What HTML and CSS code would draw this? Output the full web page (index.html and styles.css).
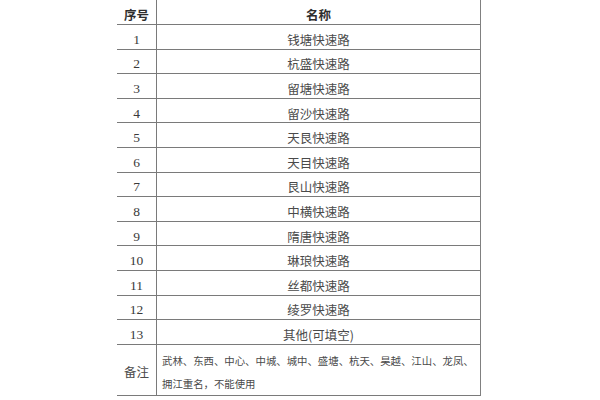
FILE: index.html
```html
<!DOCTYPE html>
<html lang="zh">
<head>
<meta charset="utf-8">
<link rel="stylesheet" href="styles.css">
</head>
<body>
<div class="page">
  <div class="table">
    <div class="row head"><div class="c1">序号</div><div class="c2">名称</div></div>
    <div class="row"><div class="c1 num">1</div><div class="c2">钱塘快速路</div></div>
    <div class="row"><div class="c1 num">2</div><div class="c2">杭盛快速路</div></div>
    <div class="row"><div class="c1 num">3</div><div class="c2">留塘快速路</div></div>
    <div class="row"><div class="c1 num">4</div><div class="c2">留沙快速路</div></div>
    <div class="row"><div class="c1 num">5</div><div class="c2">天艮快速路</div></div>
    <div class="row"><div class="c1 num">6</div><div class="c2">天目快速路</div></div>
    <div class="row"><div class="c1 num">7</div><div class="c2">艮山快速路</div></div>
    <div class="row"><div class="c1 num">8</div><div class="c2">中横快速路</div></div>
    <div class="row"><div class="c1 num">9</div><div class="c2">隋唐快速路</div></div>
    <div class="row"><div class="c1 num">10</div><div class="c2">琳琅快速路</div></div>
    <div class="row"><div class="c1 num">11</div><div class="c2">丝都快速路</div></div>
    <div class="row"><div class="c1 num">12</div><div class="c2">绫罗快速路</div></div>
    <div class="row"><div class="c1 num">13</div><div class="c2">其他(可填空)</div></div>
    <div class="row note"><div class="c1">备注</div><div class="c2">武林、东西、中心、中城、城中、盛塘、杭天、昊越、江山、龙凤、<br>拥江重名，不能使用</div></div>
  </div>
</div>
</body>
</html>
```

FILE: styles.css
```css
html, body {
  margin: 0;
  padding: 0;
  background: #ffffff;
}

.page {
  padding-left: 117px;
  font-family: "Noto Sans CJK SC", "Noto Sans", sans-serif;
  color: #4a4a4a;
}

.table {
  width: 364px;
  box-sizing: border-box;
  border-right: 1px solid #808080;
}

.row {
  display: grid;
  grid-template-columns: 40px 1fr;
  height: 24.6px;
  box-sizing: border-box;
  border-bottom: 1px solid #7a7a7a;
}

.row.head {
  height: 25px;
}

.c1 {
  border-right: 1px solid #7a7a7a;
  display: flex;
  align-items: center;
  justify-content: center;
  padding-top: 6px;
  box-sizing: border-box;
  font-size: 12.5px;
  line-height: 14px;
}

.c2 {
  display: flex;
  align-items: center;
  justify-content: center;
  padding-top: 6px;
  box-sizing: border-box;
  font-size: 12.5px;
  line-height: 14px;
}

.head .c1,
.head .c2 {
  font-weight: 700;
  color: #2e2e2e;
}

.num {
  font-family: "Liberation Serif", "Times New Roman", serif;
  font-size: 13.5px;
  color: #3a3a3a;
}

.row.note {
  height: 51.6px;
}

.note .c1 {
  padding-top: 4px;
}

.note .c2 {
  display: block;
  padding: 4px 0 0 5px;
  font-size: 10.4px;
  line-height: 23px;
  white-space: nowrap;
}
```
